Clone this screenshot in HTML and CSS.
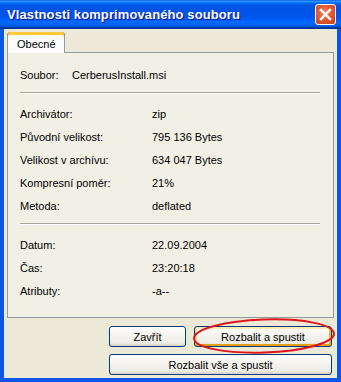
FILE: index.html
```html
<!DOCTYPE html>
<html lang="cs">
<head>
<meta charset="UTF-8">
<title>Vlastnosti komprimovaného souboru</title>
<link rel="stylesheet" href="styles.css">
</head>
<body>
    <div class="window">
        <!-- Title bar -->
        <div class="titlebar">
            <span class="title">Vlastnosti komprimovaného souboru</span>
            <button class="close">
                <svg width="13" height="13" viewBox="0 0 13 13">
                    <path d="M2 2 L11 11 M11 2 L2 11" stroke="#fff" stroke-width="2.4" stroke-linecap="square"/>
                </svg>
            </button>
        </div>

        <div class="client">
            <!-- Tabs -->
            <div class="tabs">
                <span class="tab active">Obecné</span>
            </div>

            <div class="panel">
                <div class="rows file">
                    <span>Soubor:</span><span>CerberusInstall.msi</span>
                </div>
                <div class="sep"></div>
                <div class="rows">
                    <span>Archivátor:</span><span>zip</span>
                    <span>Původní velikost:</span><span>795 136 Bytes</span>
                    <span>Velikost v archívu:</span><span>634 047 Bytes</span>
                    <span>Kompresní poměr:</span><span>21%</span>
                    <span>Metoda:</span><span>deflated</span>
                </div>
                <div class="sep"></div>
                <div class="rows">
                    <span>Datum:</span><span>22.09.2004</span>
                    <span>Čas:</span><span>23:20:18</span>
                    <span>Atributy:</span><span>-a--</span>
                </div>
            </div>

            <!-- Buttons -->
            <div class="buttons">
                <div class="btn-row">
                    <button class="btn close-btn">Zavřít</button>
                    <button class="btn default">Rozbalit a spustit</button>
                </div>
                <div class="btn-row">
                    <button class="btn wide">Rozbalit vše a spustit</button>
                </div>
            </div>
        </div>

        <!-- red marker drawn over the default button -->
        <svg class="marker" width="150" height="42" viewBox="0 0 150 42">
            <ellipse cx="73" cy="20" rx="70" ry="16.5" fill="none" stroke="#e0141b" stroke-width="2" transform="rotate(-2 73 20)"/>
        </svg>
    </div>
</body>
</html>
```

FILE: styles.css
```css
body {
    margin: 0;
    font-family: "Liberation Sans", Arial, sans-serif;
    font-size: 11px;
    color: #000;
}

.window {
    position: relative;
    width: 341px;
    height: 382px;
    display: flex;
    flex-direction: column;
    background: #0b56e4;
    overflow: hidden;
}

.titlebar {
    height: 29px;
    flex-shrink: 0;
    display: flex;
    align-items: center;
    justify-content: space-between;
    padding: 0 5px 0 7px;
    background: linear-gradient(to bottom, #0058ee 0%, #3593ff 4%, #288eff 6%, #127dff 8%, #036ffc 10%, #0262ee 14%, #0057e5 20%, #0054e3 24%, #0055eb 56%, #005bf5 66%, #026afe 76%, #0062ef 86%, #0052d6 92%, #0040ab 94%, #003092 100%);
}

.title {
    color: #fff;
    font-weight: bold;
    font-size: 13px;
    letter-spacing: 0.1px;
    text-shadow: 1px 1px #0f1089;
}

.close {
    width: 21px;
    height: 21px;
    padding: 0;
    border: 1px solid #fff;
    border-radius: 3px;
    display: flex;
    align-items: center;
    justify-content: center;
    background: radial-gradient(circle at 45% 40%, #f08c6c 0%, #e35a35 45%, #c93c17 100%);
}

.client {
    flex: 1;
    margin: 0 4px 4px 4px;
    padding: 3px 3px 0 3px;
    background: #ece9d8;
}

.tabs {
    display: flex;
    height: 20px;
}

.tab {
    position: relative;
    z-index: 1;
    height: 21px;
    padding: 0 8px 0 9px;
    display: flex;
    align-items: center;
    border: 1px solid #919b9c;
    border-top: none;
    border-bottom: none;
    border-radius: 3px 3px 0 0;
    background: #fcfcfe;
    box-shadow: inset 0 3px 0 #ffc73c, inset 0 1px 0 #e68b2c;
    padding-top: 2px;
    box-sizing: border-box;
}

.panel {
    height: 266px;
    box-sizing: border-box;
    border: 1px solid #919b9c;
    background: #f2f0e5;
    padding: 10px 13px 0 12px;
}

.rows {
    display: grid;
    grid-template-columns: 132px 1fr;
    grid-auto-rows: 23px;
    align-items: center;
}

.rows.file {
    grid-template-columns: 52px 1fr;
}

.sep {
    height: 1px;
    border-top: 1px solid #aca899;
    background: #fff;
    margin: 6px 0 8px 0;
}

.buttons {
    display: flex;
    flex-direction: column;
    align-items: flex-end;
    gap: 7px;
    padding: 8px 2px 0 0;
}

.btn-row {
    display: flex;
    gap: 8px;
}

.btn {
    height: 21px;
    padding: 0;
    font-family: "Liberation Sans", Arial, sans-serif;
    font-size: 11px;
    color: #000;
    border: 1px solid #003c74;
    border-radius: 3px;
    background: linear-gradient(to bottom, #ffffff 0%, #f6f5f0 40%, #ecebe4 85%, #d6d0c5 100%);
}

.close-btn {
    width: 77px;
}

.default {
    width: 138px;
    box-shadow: inset 0 -2px 0 #e5a01a, inset -2px 0 0 #f8b330, inset 2px 0 0 #fbd88c, inset 0 2px 0 #ffe9b8;
}

.wide {
    width: 223px;
}

.marker {
    position: absolute;
    left: 191px;
    top: 316px;
}
```
